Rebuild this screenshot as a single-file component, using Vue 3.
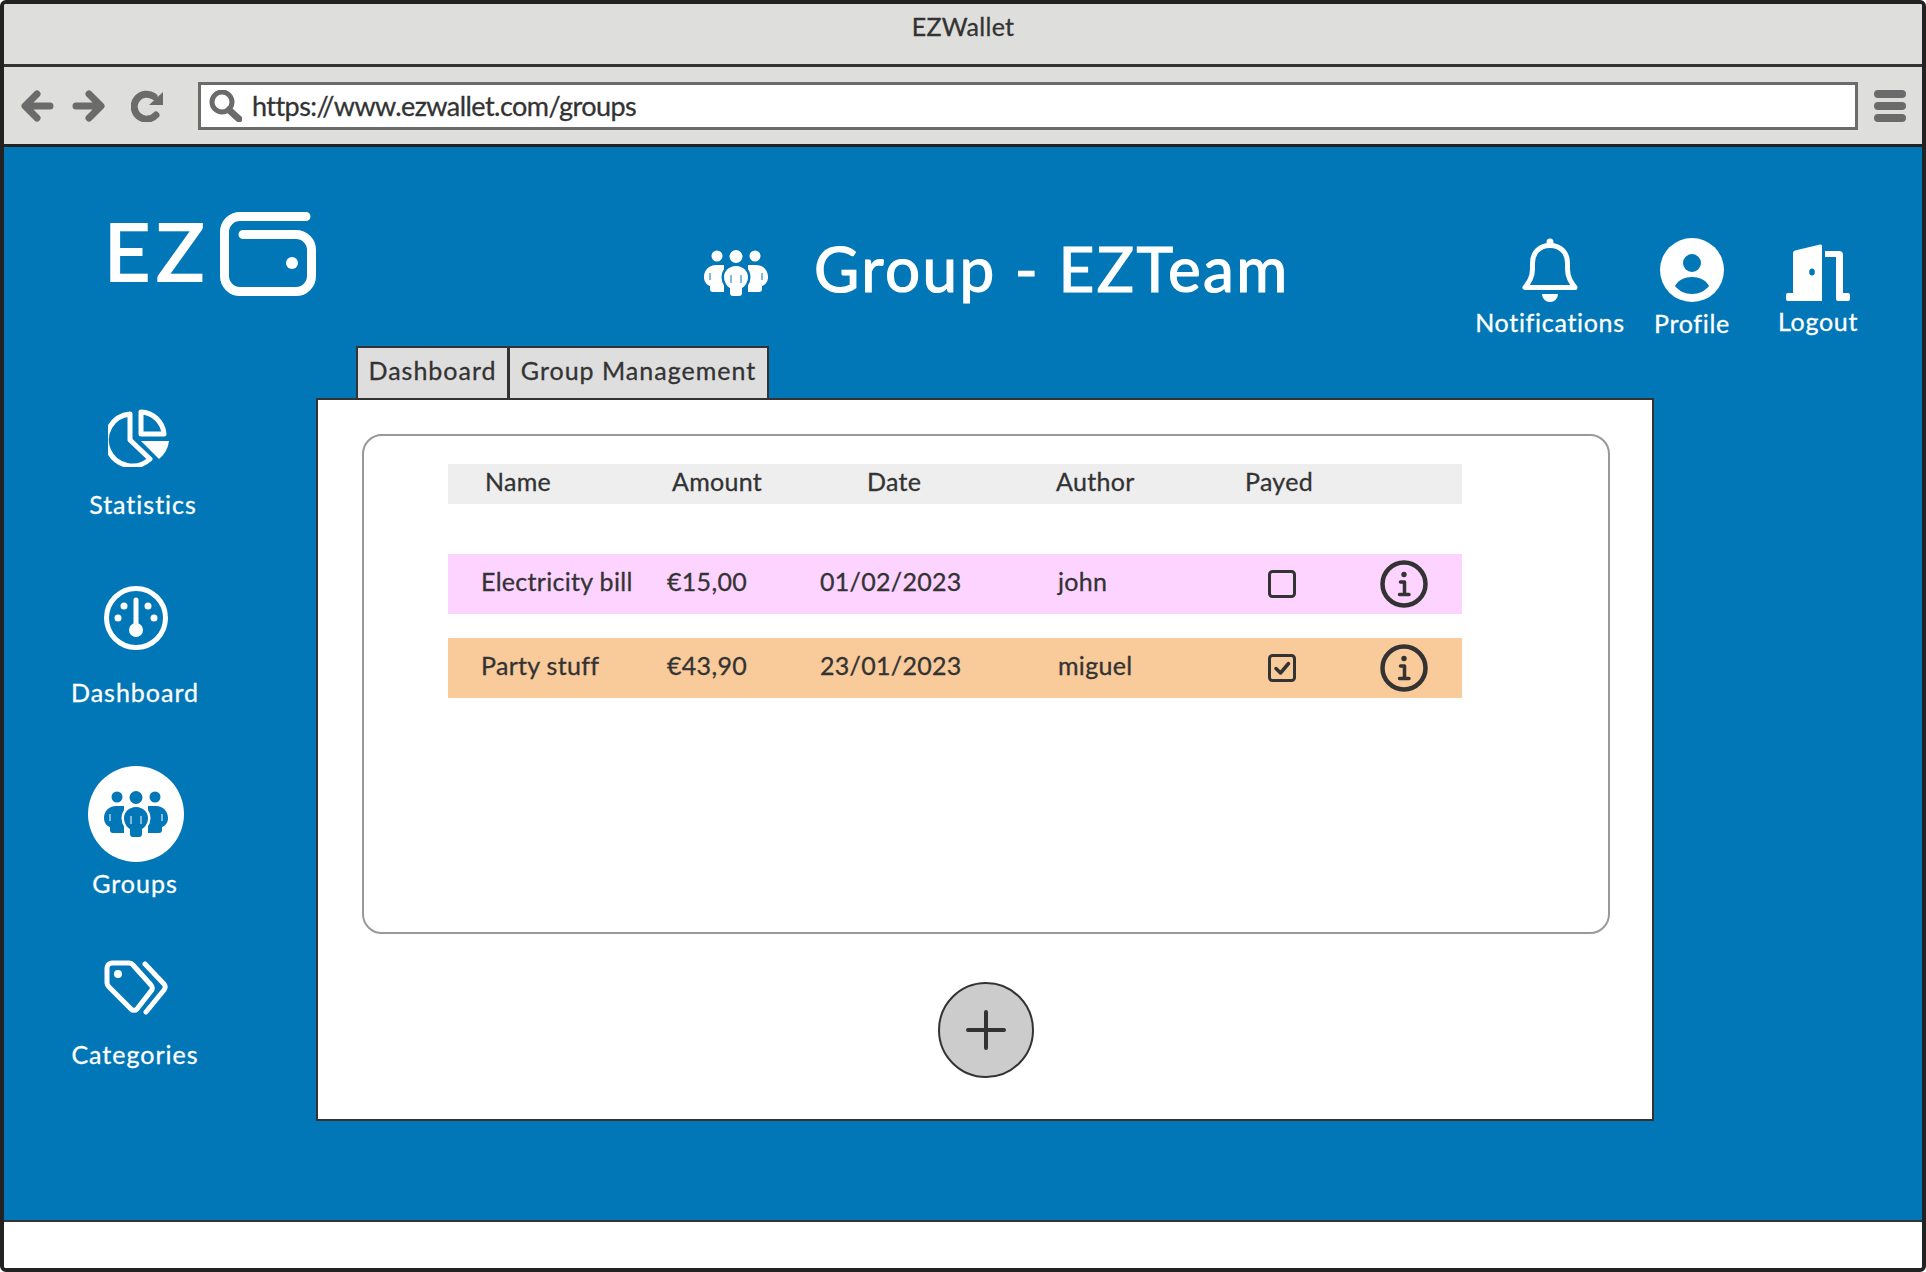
<template>
  <div class="window">
    <div class="titlebar">EZWallet</div>
    <div class="toolbar">
      <svg class="tool" width="33" height="32" viewBox="0 0 33 32"><path d="M29 16H6M16 4 4 16l12 12" /></svg>
      <svg class="tool fwd" width="33" height="32" viewBox="0 0 33 32"><path d="M4 16h23M17 4l12 12-12 12" /></svg>
      <svg class="tool reload" width="32" height="32" viewBox="0 0 32 32">
        <path d="M25 25A12.500 12.500 0 1 1 23 6.500" />
        <polygon class="solid" points="18,15 32,2 32,15" />
      </svg>
      <div class="urlbox">
        <svg class="tool search" width="33" height="32" viewBox="0 0 33 32">
          <circle cx="13" cy="12" r="10" />
          <path d="M20 20l10 9" />
        </svg>
        <span class="url">https://www.ezwallet.com/groups</span>
      </div>
      <div class="burger"><i></i><i></i><i></i></div>
    </div>

    <div class="page">
      <header class="top">
        <div class="logo">
          <span class="ez">EZ</span>
          <svg width="96" height="84" viewBox="0 0 96 84" class="wallet">
            <path d="M86 4.500H20A15.500 15.500 0 0 0 4.500 20V64A15.500 15.500 0 0 0 20 79.500H76A15.500 15.500 0 0 0 91.500 64V38A15.500 15.500 0 0 0 76 22.500H23" />
            <circle cx="72" cy="51" r="6" />
          </svg>
        </div>
        <svg class="group-icon on-blue head-group" width="64" height="46" viewBox="0 0 64 46">
          <circle cx="13" cy="6" r="5.500" /><circle cx="32" cy="6.500" r="6.500" /><circle cx="51" cy="6" r="5.500" />
          <path d="M12 15C5 15 0 20 0 27c0 5 3 8 6 9v3q0 3 3 3h11V15Z" />
          <path d="M52 15c7 0 12 5 12 12 0 5-3 8-6 9v3q0 3-3 3H44V15Z" />
          <path class="cut" d="M20 27c0-6 5-11 12-11s12 5 12 11c0 6-4 10-6 11v5q0 3-3 3h-6q-3 0-3-3v-5c-2-1-6-5-6-11Z" />
          <path class="slit" d="M6 23v7M27 25v8M37 25v8M58 23v7" />
        </svg>
        <h1 class="title">Group - EZTeam</h1>
        <div class="actions">
          <div class="action note">
            <svg width="56" height="64" viewBox="0 0 56 64" class="bell">
              <circle cx="28" cy="4" r="3.500" />
              <path class="line" d="M28 7.500C17 7.500 10.500 15 10.500 25v6c0 8-3.500 13-7.500 18.500h50C49 44 45.500 39 45.500 31v-6C45.500 15 39 7.500 28 7.500Z" />
              <path d="M20 56h16a8 8 0 0 1-16 0Z" />
            </svg>
            <span>Notifications</span>
          </div>
          <div class="action prof">
            <svg width="64" height="64" viewBox="0 0 64 64">
              <circle cx="32" cy="32" r="32" />
              <circle class="blue" cx="32" cy="25" r="9" />
              <path class="blue" d="M15 48c3-6 10-9 17-9s14 3 17 9c-4 5-10 8-17 8s-13-3-17-8Z" />
            </svg>
            <span>Profile</span>
          </div>
          <div class="action out">
            <svg width="64" height="58" viewBox="0 0 64 58">
              <path d="M9 7.500 34 1.500q2-.5 2 1.500v55H2q-2 0-2-2v-4q0-2 2-2h5V10q0-2 2-2.500Z" />
              <ellipse class="blue" cx="26" cy="29" rx="2.800" ry="3.500" />
              <path d="M39 8h14q4 0 4 4v38h5q2 0 2 2v4q0 2-2 2H52q-2 0-2-2V14H39Z" />
            </svg>
            <span>Logout</span>
          </div>
        </div>
      </header>

      <nav class="side">
        <div class="nav-item stats">
          <svg width="61" height="58" viewBox="0 0 61 58" class="line-icon">
            <path d="M22 5A26 26 0 1 0 42 50L22 31Z" />
            <path d="M33 3A24 24 0 0 1 56 25H33Z" />
            <path class="fill" d="M33 32H61A27 27 0 0 1 51 50Z" />
          </svg>
          <span>Statistics</span>
        </div>
        <div class="nav-item dash">
          <svg width="64" height="64" viewBox="0 0 64 64" class="line-icon">
            <circle cx="32" cy="32" r="29.500" />
            <path d="M32 14V44" />
            <circle class="fill" cx="32" cy="44" r="7" />
            <circle class="fill" cx="20" cy="20" r="3.500" />
            <circle class="fill" cx="44" cy="20" r="3.500" />
            <circle class="fill" cx="14" cy="32" r="3.500" />
            <circle class="fill" cx="50" cy="32" r="3.500" />
          </svg>
          <span>Dashboard</span>
        </div>
        <div class="nav-item groups">
          <div class="bubble">
            <svg class="group-icon on-white" width="64" height="46" viewBox="0 0 64 46">
              <circle cx="13" cy="6" r="5.500" /><circle cx="32" cy="6.500" r="6.500" /><circle cx="51" cy="6" r="5.500" />
              <path d="M12 15C5 15 0 20 0 27c0 5 3 8 6 9v3q0 3 3 3h11V15Z" />
              <path d="M52 15c7 0 12 5 12 12 0 5-3 8-6 9v3q0 3-3 3H44V15Z" />
              <path class="cut" d="M20 27c0-6 5-11 12-11s12 5 12 11c0 6-4 10-6 11v5q0 3-3 3h-6q-3 0-3-3v-5c-2-1-6-5-6-11Z" />
              <path class="slit" d="M6 23v7M27 25v8M37 25v8M58 23v7" />
            </svg>
          </div>
          <span>Groups</span>
        </div>
        <div class="nav-item cats">
          <svg width="64" height="56" viewBox="0 0 64 56" class="line-icon">
            <path d="M3 8a5 5 0 0 1 5-5h17a6 6 0 0 1 4 2l18 20a4 4 0 0 1 0 6L33 49a4 4 0 0 1-6 0L5 27a6 6 0 0 1-2-4Z" />
            <circle class="fill" cx="14" cy="14" r="4" />
            <path d="M41 4 60 24a5 5 0 0 1 0 6L42 52" />
          </svg>
          <span>Categories</span>
        </div>
      </nav>

      <main class="main">
        <div class="tabs">
          <div class="tab">Dashboard</div>
          <div class="tab second">Group Management</div>
        </div>
        <section class="card">
          <div class="panel">
            <div class="head-row">
              <span>Name</span><span>Amount</span><span>Date</span><span>Author</span><span>Payed</span>
            </div>
            <div v-for="row in rows" :key="row.name" class="row" :class="row.tone">
              <span>{{ row.name }}</span>
              <span>{{ row.amount }}</span>
              <span>{{ row.date }}</span>
              <span>{{ row.author }}</span>
              <svg width="28" height="28" viewBox="0 0 28 28" class="check">
                <rect x="1.500" y="1.500" width="25" height="25" rx="3" />
                <path v-if="row.payed" d="M8 14.500l4.500 4.500 8-9.500" />
              </svg>
              <svg width="48" height="48" viewBox="0 0 48 48" class="info">
                <circle cx="24" cy="24" r="21.500" />
                <circle class="dot" cx="24" cy="14.500" r="2.700" />
                <path d="M20.500 22H24.500V33M19.500 34.500H29" />
              </svg>
            </div>
          </div>
          <button class="fab">
            <svg width="40" height="40" viewBox="0 0 40 40"><path d="M20 2V38M2 20H38" /></svg>
          </button>
        </section>
      </main>
    </div>

    <div class="footer"></div>
  </div>
</template>

<script setup>
const rows = [
  { name: 'Electricity bill', amount: '€15,00', date: '01/02/2023', author: 'john', payed: false, tone: 'pink' },
  { name: 'Party stuff', amount: '€43,90', date: '23/01/2023', author: 'miguel', payed: true, tone: 'orange' },
]
</script>

<style>
html, body { margin: 0; background: #fff; }
</style>

<style scoped>
.window {
  width: 1926px;
  height: 1272px;
  box-sizing: border-box;
  border: 4px solid #222;
  border-radius: 6px;
  display: flex;
  flex-direction: column;
  overflow: hidden;
  font-family: Lato, "Noto Sans", sans-serif;
  color: #333;
  font-size: 25px;
  letter-spacing: 0.3px;
  -webkit-text-stroke: 0.3px;
}
.titlebar {
  height: 60px;
  flex: none;
  background: #dededc;
  border-bottom: 3px solid #333;
  text-align: center;
  line-height: 44px;
}
.toolbar {
  height: 77px;
  flex: none;
  background: #dededc;
  border-bottom: 3px solid #222;
  display: flex;
  align-items: center;
  padding-left: 17px;
}
.tool path, .tool circle {
  fill: none;
  stroke: #6b6b6b;
  stroke-width: 7;
  stroke-linecap: round;
  stroke-linejoin: round;
}
.tool .solid { fill: #6b6b6b; }
.fwd { margin-left: 18px; }
.reload { margin-left: 26px; }
.urlbox {
  margin-left: 35px;
  width: 1660px;
  height: 48px;
  box-sizing: border-box;
  background: #fff;
  border: 3px solid #6b6b6b;
  display: flex;
  align-items: center;
}
.search { margin-left: 8px; }
.search circle { stroke-width: 5; }
.url {
  margin-left: 10px;
  font-size: 27px;
  letter-spacing: -0.55px;
  color: #333;
}
.burger {
  margin-left: 16px;
  width: 32px;
  display: flex;
  flex-direction: column;
  gap: 4px;
}
.burger i {
  display: block;
  height: 8px;
  border-radius: 4px;
  background: #6b6b6b;
}

.page {
  flex: 1;
  background: #0177b7;
  color: #fff;
  display: grid;
  grid-template-columns: 313px 1fr;
  grid-template-rows: 199px 1fr;
}
.top {
  grid-column: 1 / 3;
  display: flex;
  align-items: flex-start;
}
.logo {
  margin: 65px 0 0 105px;
  display: flex;
  align-items: flex-start;
  width: 207px;
}
.ez {
  font-size: 80px;
  line-height: 96px;
  margin: -10px 0 0 -5px;
  width: 116px;
  letter-spacing: 6px;
  -webkit-text-stroke: 2px;
}
.wallet path {
  fill: none;
  stroke: #fff;
  stroke-width: 9;
  stroke-linecap: round;
}
.wallet circle { fill: #fff; }
.head-group { margin: 103px 0 0 388px; }
.group-icon circle, .group-icon path { fill: currentColor; }
.group-icon .cut { stroke-width: 5; paint-order: stroke; }
.group-icon .slit { fill: none; stroke-width: 1; }
.on-blue { color: #fff; }
.on-blue .cut, .on-blue .slit { stroke: #0177b7; }
.on-white { color: #0177b7; }
.on-white .cut, .on-white .slit { stroke: #fff; }
.title {
  margin: 84px 0 0 46px;
  font-size: 62px;
  line-height: 74px;
  font-weight: 400;
  letter-spacing: 2.4px;
  -webkit-text-stroke: 1.2px;
}
.actions {
  margin-left: auto;
  margin-top: 91px;
  padding-right: 44px;
  display: flex;
  letter-spacing: 0.7px;
}
.action {
  display: flex;
  flex-direction: column;
  align-items: center;
  width: 120px;
}
.action svg { fill: #fff; }
.action span { line-height: 30px; }
.action .blue { fill: #0177b7; }
.note { width: 160px; margin-right: 2px; }
.note span { margin-top: 5px; }
.note .line { fill: none; stroke: #fff; stroke-width: 5; stroke-linejoin: round; }
.prof { margin-right: 6px; }
.prof span { margin-top: 6px; }
.out { margin-top: 5px; }
.out span { margin-top: 5px; }

.side {
  padding-top: 63px;
  width: 262px;
  letter-spacing: 1px;
}
.nav-item {
  display: flex;
  flex-direction: column;
  align-items: center;
}
.nav-item span { line-height: 30px; }
.line-icon path, .line-icon circle {
  fill: none;
  stroke: #fff;
  stroke-width: 5;
  stroke-linecap: round;
  stroke-linejoin: round;
}
.line-icon .fill { fill: #fff; stroke: none; }
.stats { height: 177px; }
.stats svg { margin-left: 7px; }
.stats span { margin: 22px 0 0 16px; }
.dash { height: 180px; }
.dash svg { margin-left: 2px; }
.dash span { margin-top: 27px; }
.groups { height: 194px; }
.groups span { margin-top: 6px; }
.cats svg { margin-left: 2px; }
.cats span { margin-top: 23px; }
.bubble {
  width: 96px;
  height: 96px;
  margin-left: 2px;
  border-radius: 50%;
  background: #fff;
  display: flex;
  align-items: center;
  justify-content: center;
}

.main { color: #333; }
.tabs {
  display: flex;
  margin-left: 39px;
  height: 52px;
  letter-spacing: 1px;
}
.tab {
  background: #dedede;
  border: 2px solid #333;
  border-bottom: 0;
  box-sizing: border-box;
  width: 153px;
  text-align: center;
  line-height: 44px;
}
.tab.second { width: 261px; margin-left: -1px; }
.card {
  width: 1338px;
  height: 723px;
  margin-left: -1px;
  box-sizing: border-box;
  background: #fff;
  border: 2px solid #333;
  padding: 34px 0 0 44px;
}
.panel {
  width: 1248px;
  height: 500px;
  box-sizing: border-box;
  border: 2px solid #999;
  border-radius: 20px;
  padding: 28px 0 0 84px;
}
.head-row, .row {
  width: 1014px;
  display: grid;
  align-items: center;
}
.head-row {
  height: 40px;
  background: #eee;
  padding-left: 37px;
  box-sizing: border-box;
  grid-template-columns: 187px 195px 189px 189px 1fr;
  margin-bottom: 50px;
}
.head-row span { margin-bottom: 7px; }
.row {
  height: 60px;
  padding-left: 33px;
  box-sizing: border-box;
  grid-template-columns: 186px 153px 238px 210px 112px 48px;
  margin-bottom: 24px;
}
.row span { margin-bottom: 7px; }
.pink { background: #fdd4ff; }
.orange { background: #f9ca9a; }
.check rect, .check path, .info circle, .info path {
  fill: none;
  stroke: #333;
  stroke-width: 3;
  stroke-linecap: round;
  stroke-linejoin: round;
}
.check path { stroke-width: 3.500; }
.info circle { stroke-width: 4.500; }
.info path { stroke-width: 3.500; }
.info .dot { fill: #333; stroke: none; }
.fab {
  display: flex;
  align-items: center;
  justify-content: center;
  margin: 48px 0 0 576px;
  width: 96px;
  height: 96px;
  padding: 0;
  border-radius: 50%;
  border: 2px solid #333;
  background: #ccc;
}
.fab path {
  fill: none;
  stroke: #333;
  stroke-width: 4;
  stroke-linecap: round;
}
.footer {
  height: 46px;
  flex: none;
  background: #fff;
  border-top: 2px solid #333;
}
</style>
